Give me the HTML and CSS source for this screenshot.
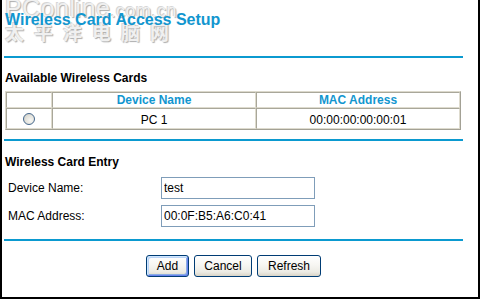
FILE: index.html
```html
<!DOCTYPE html>
<html>
<head>
<meta charset="utf-8">
<link rel="stylesheet" href="styles.css">
</head>
<body>
<div class="page">
  <header class="head">
    <div class="wm">
      <span class="wm-brand">PConline<span class="wm-dom">.com.cn</span></span>
      <span class="wm-cn">太平洋电脑网</span>
    </div>
    <h1 class="title">Wireless Card Access Setup</h1>
  </header>
  <div class="rule"></div>

  <h2 class="sec sec-avail">Available Wireless Cards</h2>
  <table class="cards">
    <tr>
      <th class="c-sel"></th>
      <th class="c-name">Device Name</th>
      <th class="c-mac">MAC Address</th>
    </tr>
    <tr>
      <td class="c-sel"><span class="radio"></span></td>
      <td>PC 1</td>
      <td>00:00:00:00:00:01</td>
    </tr>
  </table>
  <div class="rule rule-2"></div>

  <h2 class="sec sec-entry">Wireless Card Entry</h2>
  <div class="form">
    <div class="row">
      <label class="lbl">Device Name:</label>
      <input class="field" type="text" value="test">
    </div>
    <div class="row">
      <label class="lbl">MAC Address:</label>
      <input class="field" type="text" value="00:0F:B5:A6:C0:41">
    </div>
  </div>
  <div class="rule rule-3"></div>

  <div class="buttons">
    <button class="btn btn-add btn-default">Add</button>
    <button class="btn btn-cancel">Cancel</button>
    <button class="btn btn-refresh">Refresh</button>
  </div>
</div>
</body>
</html>
```

FILE: styles.css
```css
html, body {
  margin: 0;
  padding: 0;
  background: #fff;
}

body {
  font-family: "Liberation Sans", Arial, sans-serif;
  font-size: 12px;
  color: #000;
}

.page {
  position: relative;
  width: 480px;
  height: 299px;
  box-sizing: border-box;
  border-left: 2px solid #000;
  border-right: 2px solid #000;
  border-bottom: 2px solid #000;
  background: #fff;
  overflow: hidden;
}

.head {
  position: relative;
  height: 56px;
  box-sizing: border-box;
  padding: 10px 0 0 3px;
}

.wm {
  position: absolute;
  left: 3px;
  top: -5px;
  display: flex;
  flex-direction: column;
  color: #f0f0f0;
  text-shadow: 1px 1px 1px #adadad, -1px -1px 0 #d6d6d6;
  pointer-events: none;
}

.wm-brand {
  font-family: "Liberation Sans", Arial, sans-serif;
  font-size: 25px;
  line-height: 26px;
  letter-spacing: 0.5px;
}

.wm-dom {
  font-size: 18px;
}

.wm-cn {
  font-family: "Noto Sans CJK SC", sans-serif;
  font-size: 19px;
  line-height: 20px;
  font-weight: bold;
  letter-spacing: 10px;
  margin-top: -2px;
}

.title {
  position: relative;
  margin: 0;
  font-size: 16px;
  line-height: 19px;
  font-weight: bold;
  color: #1296cf;
}

.rule {
  height: 2px;
  width: 459px;
  margin-left: 2px;
  background: #0b9ad0;
}

.sec {
  margin: 0;
  padding-left: 3px;
  font-size: 12px;
  line-height: 14px;
  font-weight: bold;
}

.sec-avail {
  margin-top: 13px;
}

.cards {
  margin: 6px 0 0 3px;
  width: 456px;
  border-collapse: separate;
  border-spacing: 0;
  border: 1px solid;
  border-color: #dcd9cc #a3a195 #a3a195 #dcd9cc;
  table-layout: fixed;
}

.cards th,
.cards td {
  border: 1px solid;
  border-color: #a9a79a #dedbce #dedbce #a9a79a;
  padding: 0;
  text-align: center;
  font-size: 12px;
  line-height: 14px;
}

.cards th {
  font-weight: bold;
  color: #1296cf;
}

.cards td {
  padding: 4px 0 1px;
}

.cards .c-sel {
  width: 44px;
}

.cards td.c-sel {
  padding: 4px 0 3px;
}

.radio {
  display: block;
  width: 12px;
  height: 12px;
  margin: 0 auto;
  box-sizing: border-box;
  border: 1px solid #45678c;
  border-radius: 50%;
  background: radial-gradient(circle at 65% 65%, #f7f7f4 0%, #e2e1da 55%, #c9c8c0 100%);
}

.rule-2 {
  margin-top: 9px;
}

.sec-entry {
  margin-top: 14px;
}

.form {
  margin-top: 8px;
  padding-left: 6px;
  display: flex;
  flex-direction: column;
  gap: 6px;
}

.row {
  display: flex;
  align-items: center;
  height: 22px;
}

.lbl {
  width: 153px;
  font-size: 12px;
  line-height: 14px;
}

.field {
  width: 154px;
  height: 22px;
  box-sizing: border-box;
  margin: 0;
  border: 1px solid #7f9db9;
  padding: 0 2px;
  font-family: "Liberation Sans", Arial, sans-serif;
  font-size: 12px;
  color: #000;
  background: #fff;
  outline: none;
}

.rule-3 {
  margin-top: 12px;
}

.buttons {
  width: 459px;
  margin: 14px 0 0 2px;
  display: flex;
  justify-content: center;
  gap: 5px;
}

.btn {
  height: 22px;
  box-sizing: border-box;
  margin: 0;
  padding: 0;
  border: 1px solid #003c74;
  border-radius: 3px;
  background: linear-gradient(180deg, #ffffff 0%, #f7f6f2 45%, #ecebe4 80%, #d9d4c6 100%);
  font-family: "Liberation Sans", Arial, sans-serif;
  font-size: 12px;
  color: #000;
}

.btn-add {
  width: 43px;
}

.btn-cancel {
  width: 58px;
}

.btn-refresh {
  width: 64px;
}

.btn-default {
  box-shadow: inset 1px 1px 0 #cee7ff, inset -1px -1px 0 #6982ee, inset 2px 2px 0 #bcd4f6, inset -2px -2px 0 #89ade4;
}
```
